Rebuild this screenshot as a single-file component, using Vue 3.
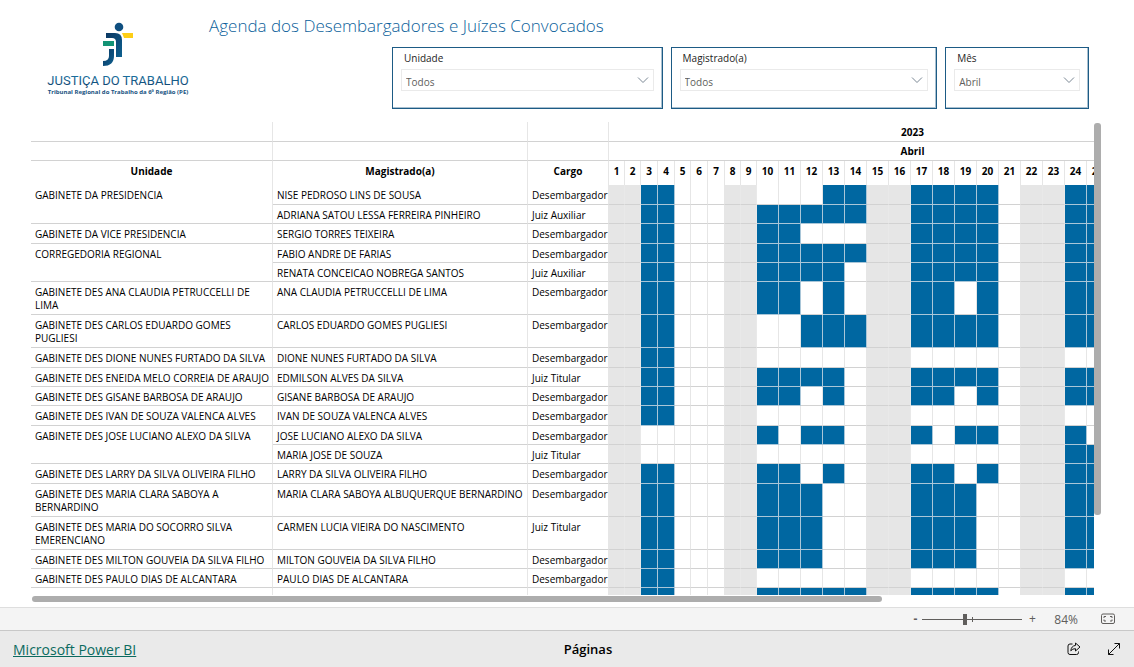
<script setup>
import { ref } from 'vue'

const filters = ref([
  { id: 'unidade', label: 'Unidade', value: 'Todos' },
  { id: 'magistrado', label: 'Magistrado(a)', value: 'Todos' },
  { id: 'mes', label: 'Mês', value: 'Abril' },
])
const zoom = ref(84)

const days = Array.from({ length: 25 }, (_, i) => i + 1)
const wideSingles = [3, 4, 6, 7]
const weekend = (d) => d % 7 === 1 || d % 7 === 2

const dayClass = (d) => (d > 9 ? 'c-double' : wideSingles.includes(d) ? 'c-wide' : 'c-single')

const D = 'Desembargador'
const A = 'Juiz Auxiliar'
const T = 'Juiz Titular'
const all = [3, 4, 10, 11, 12, 13, 14, 17, 18, 19, 20, 24, 25]
const rows = [
  { u: 'GABINETE DA PRESIDENCIA', span: 2, m: 'NISE PEDROSO LINS DE SOUSA', c: D, size: 'mid', on: [3, 4, 13, 14, 17, 18, 19, 20, 24, 25] },
  { m: 'ADRIANA SATOU LESSA FERREIRA PINHEIRO', c: A, size: 'low', on: all },
  { u: 'GABINETE DA VICE PRESIDENCIA', m: 'SERGIO TORRES TEIXEIRA', c: D, size: 'mid', on: [3, 4, 10, 11, 17, 18, 19, 20, 24, 25] },
  { u: 'CORREGEDORIA REGIONAL', span: 2, m: 'FABIO ANDRE DE FARIAS', c: D, size: 'low', on: all },
  { m: 'RENATA CONCEICAO NOBREGA SANTOS', c: A, size: 'low', on: [3, 4, 10, 11, 12, 13, 17, 18, 19, 20, 24, 25] },
  { u: 'GABINETE DES ANA CLAUDIA PETRUCCELLI DE LIMA', m: 'ANA CLAUDIA PETRUCCELLI DE LIMA', c: D, size: 'tall', on: [3, 4, 10, 11, 13, 17, 18, 20, 24, 25] },
  { u: 'GABINETE DES CARLOS EDUARDO GOMES PUGLIESI', m: 'CARLOS EDUARDO GOMES PUGLIESI', c: D, size: 'tall', on: [3, 4, 12, 13, 14, 17, 18, 19, 20, 24, 25] },
  { u: 'GABINETE DES DIONE NUNES FURTADO DA SILVA', m: 'DIONE NUNES FURTADO DA SILVA', c: D, size: 'mid', on: [3, 4] },
  { u: 'GABINETE DES ENEIDA MELO CORREIA DE ARAUJO', m: 'EDMILSON ALVES DA SILVA', c: T, size: 'low', on: [3, 4, 10, 11, 12, 13, 17, 18, 19, 20, 24, 25] },
  { u: 'GABINETE DES GISANE BARBOSA DE ARAUJO', m: 'GISANE BARBOSA DE ARAUJO', c: D, size: 'low', on: [3, 4, 10, 11, 13, 17, 18, 20, 24, 25] },
  { u: 'GABINETE DES IVAN DE SOUZA VALENCA ALVES', m: 'IVAN DE SOUZA VALENCA ALVES', c: D, size: 'mid', on: [3, 4] },
  { u: 'GABINETE DES JOSE LUCIANO ALEXO DA SILVA', span: 2, m: 'JOSE LUCIANO ALEXO DA SILVA', c: D, size: 'low', on: [10, 12, 13, 17, 19, 20, 24] },
  { m: 'MARIA JOSE DE SOUZA', c: T, size: 'low', on: [24, 25] },
  { u: 'GABINETE DES LARRY DA SILVA OLIVEIRA FILHO', m: 'LARRY DA SILVA OLIVEIRA FILHO', c: D, size: 'mid', on: [3, 4, 10, 11, 13, 17, 18, 20, 24, 25] },
  { u: 'GABINETE DES MARIA CLARA SABOYA A BERNARDINO', m: 'MARIA CLARA SABOYA ALBUQUERQUE BERNARDINO', c: D, size: 'tall', on: [3, 4, 10, 11, 12, 17, 18, 19, 24, 25] },
  { u: 'GABINETE DES MARIA DO SOCORRO SILVA EMERENCIANO', m: 'CARMEN LUCIA VIEIRA DO NASCIMENTO', c: T, size: 'tall', on: [3, 4, 10, 11, 12, 17, 18, 19, 24, 25] },
  { u: 'GABINETE DES MILTON GOUVEIA DA SILVA FILHO', m: 'MILTON GOUVEIA DA SILVA FILHO', c: D, size: 'low', on: [3, 4, 10, 11, 12, 17, 18, 19, 24, 25] },
  { u: 'GABINETE DES PAULO DIAS DE ALCANTARA', m: 'PAULO DIAS DE ALCANTARA', c: D, size: 'low', on: [3, 4] },
  { u: ' ', m: '', c: '', size: 'mid', on: all },
]
</script>

<template>
  <div class="page">
    <main class="report">
      <header class="top">
        <svg class="logo" viewBox="0 0 144 84" role="img" aria-label="Justiça do Trabalho">
          <defs>
            <linearGradient id="ink" x1="0" y1="0" x2="0" y2="1">
              <stop offset="0" stop-color="#1d7cab" />
              <stop offset="1" stop-color="#0d3c68" />
            </linearGradient>
            <linearGradient id="body" x1="0" y1="0" x2="1" y2="1">
              <stop offset="0" stop-color="#0b3762" />
              <stop offset="1" stop-color="#0d608f" />
            </linearGradient>
          </defs>
          <circle cx="73" cy="12" r="4.3" fill="#0f4f80" />
          <path d="M60 18H69Q76 18 76 25V42H70V27Q70 23 66 23H60Z" fill="url(#body)" />
          <path d="M76 18H87V23H78Z" fill="#fdce16" />
          <path d="M57 26H68V31H57Z" fill="#129375" />
          <path d="M63 34H68V41Q68 51 57 51V46Q63 46 63 41Z" fill="url(#body)" />
          <text x="72" y="70" text-anchor="middle" class="logo-name" fill="url(#ink)">JUSTIÇA DO TRABALHO</text>
          <text x="72" y="79" text-anchor="middle" class="logo-sub">Tribunal Regional do Trabalho da 6ª Região (PE)</text>
        </svg>
        <div class="heading">
          <h1>Agenda dos Desembargadores e Juízes Convocados</h1>
          <div class="filters">
            <div v-for="f in filters" :key="f.id" class="filter">
              <label :for="f.id">{{ f.label }}</label>
              <div class="pick">
                <select :id="f.id" v-model="f.value">
                  <option>{{ f.value }}</option>
                </select>
                <svg viewBox="0 0 12 8" aria-hidden="true"><path d="M1 1.500L6 6.500L11 1.500" /></svg>
              </div>
            </div>
          </div>
        </div>
      </header>

      <section class="matrix">
        <div class="viewport">
          <table>
            <colgroup>
              <col class="c-unit" /><col class="c-name" /><col class="c-role" />
              <col v-for="d in days" :key="d" :class="dayClass(d)" />
              <col class="c-rest" />
            </colgroup>
            <thead>
              <tr class="group"><th></th><th></th><th></th><th colspan="26">2023</th></tr>
              <tr class="group"><th></th><th></th><th></th><th colspan="26">Abril</th></tr>
              <tr class="names">
                <th>Unidade</th><th>Magistrado(a)</th><th>Cargo</th>
                <th v-for="d in days" :key="d">{{ d }}</th>
                <th></th>
              </tr>
            </thead>
            <tbody>
              <tr v-for="(r, i) in rows" :key="i" :class="r.size">
                <td v-if="r.u" :rowspan="r.span || 1">{{ r.u }}</td>
                <td>{{ r.m }}</td>
                <td class="role">{{ r.c }}</td>
                <td v-for="d in days" :key="d" class="mark" :class="{ on: r.on.includes(d), off: weekend(d) }"></td>
                <td></td>
              </tr>
            </tbody>
          </table>
        </div>
        <div class="vbar"><span></span></div>
        <div class="hbar"><span></span></div>
      </section>
    </main>

    <div class="zoombar">
      <button type="button" class="minus" aria-label="Reduzir">-</button>
      <input v-model="zoom" type="range" min="10" max="186" aria-label="Zoom" />
      <button type="button" aria-label="Ampliar">+</button>
      <output>84%</output>
      <button type="button" class="fit" aria-label="Ajustar à página">
        <svg viewBox="0 0 14 12"><rect x=".5" y="1" width="13" height="9.500" rx="1.500" /><path d="M5 3.500H3V5M3 6.500V8H5M9 3.500H11V5M11 6.500V8H9" /></svg>
      </button>
    </div>

    <footer>
      <a href="#">Microsoft Power BI</a>
      <strong>Páginas</strong>
      <div class="actions">
        <button type="button" aria-label="Compartilhar">
          <svg viewBox="0 0 14 14"><path d="M5.500 2H3Q1 2 1 4V10.500Q1 12.500 3 12.500H9.500Q11.500 12.500 11.500 10.500V9.500" /><path d="M8.500 1L13 5L8.500 9V6.700Q5.500 6.500 3.800 8.800Q4.200 4 8.500 3.400Z" /></svg>
        </button>
        <button type="button" aria-label="Tela inteira">
          <svg viewBox="0 0 14 14"><path d="M1.500 12.500L12.500 1.500M7.500 1.500H12.500V6.500M1.500 7.500V12.500H6.500" /></svg>
        </button>
      </div>
    </footer>
  </div>
</template>

<style>
body {
  margin: 0;
}
</style>

<style scoped>
* {
  box-sizing: border-box;
}
.page {
  display: flex;
  flex-direction: column;
  height: 100vh;
  overflow: hidden;
  background: #fff;
  color: #000;
  font-family: "Open Sans", "Noto Sans", sans-serif;
  font-size: 10px;
}
button {
  padding: 0;
  border: 0;
  background: none;
  color: inherit;
  font: inherit;
}
svg {
  display: block;
}
.report {
  display: flex;
  flex: 1;
  flex-direction: column;
  min-height: 0;
  padding: 15px 33px 5px 31px;
}
.top {
  display: flex;
  flex: none;
  height: 107px;
}
.logo {
  flex: none;
  width: 144px;
  height: 84px;
  margin-left: 15px;
}
.logo-name {
  font: 13px Roboto, sans-serif;
}
.logo-sub {
  fill: #17527f;
  font: 700 6px "Open Sans", sans-serif;
}
.heading {
  flex: 1;
  margin-left: 19px;
}
h1 {
  height: 32px;
  margin: 0;
  color: #0b5f9b;
  font-size: 17px;
  font-weight: 300;
  line-height: 22px;
}
.filters {
  display: grid;
  grid-template-columns: 271fr 267fr 144fr;
  gap: 8px;
  margin-right: 12px;
  margin-left: 183px;
}
.filter {
  height: 62px;
  padding: 3px 8px 0;
  border: 1px solid #1d5b85;
  box-shadow: inset -1px -1px #a9c0d0;
}
.filter label {
  display: block;
  padding-left: 3px;
  color: #252423;
  font-size: 10px;
  font-weight: 500;
  line-height: 14px;
}
.pick {
  display: flex;
  align-items: center;
  height: 22px;
  margin-top: 4px;
  padding: 0 4px;
  border: 1px solid #eaeaea;
}
.pick select {
  flex: 1;
  padding: 3px 0 0;
  border: 0;
  appearance: none;
  background: none;
  color: #605e5c;
  font: inherit;
}
.pick svg {
  width: 12px;
  height: 8px;
  fill: none;
  stroke: #7a8794;
}
.matrix {
  display: grid;
  flex: 1;
  grid-template-columns: minmax(0, 1fr) 7px;
  grid-template-rows: minmax(0, 1fr) 7px;
  min-height: 0;
}
.viewport {
  overflow: hidden;
}
table {
  width: 1186px;
  border-spacing: 0;
  table-layout: fixed;
}
.c-unit {
  width: 242px;
}
.c-name {
  width: 255px;
}
.c-role {
  width: 81px;
}
.c-single {
  width: 16px;
}
.c-wide {
  width: 17px;
}
.c-double {
  width: 22px;
}
th,
td {
  padding: 0;
  border-right: 1px solid #e6e6e6;
}
.group {
  height: 19px;
}
.group th {
  border-bottom: 1px solid #d2d2d2;
  line-height: 18px;
}
.group:first-child {
  height: 20px;
}
.names {
  height: 24px;
}
.names th {
  padding-bottom: 4px;
  line-height: 18px;
}
.low {
  height: 19px;
}
.mid {
  height: 20px;
}
.tall {
  height: 33px;
}
td {
  padding: 4px 0 0 4px;
  border-bottom: 1px solid #d2d2d2;
  line-height: 13px;
  vertical-align: top;
}
.low td,
.mid td {
  padding-top: 3px;
  line-height: 14px;
}
td.mark {
  padding: 0;
  line-height: 0;
}
.off {
  border-right-color: #e9e9e9;
  background: #e6e6e6;
}
.on {
  border-color: #a9c6d8;
  background: #0067a1;
}
.role {
  white-space: nowrap;
}
.vbar {
  grid-column: 2;
  padding-top: 1px;
}
.vbar span {
  display: block;
  height: 83%;
  border-radius: 3px;
  background: #adadad;
}
.hbar {
  grid-row: 2;
  grid-column: 1;
  padding: 1px 0 0 1px;
}
.hbar span {
  display: block;
  width: 80%;
  height: 6px;
  border-radius: 3px;
  background: #adadad;
}
.zoombar {
  display: flex;
  flex: none;
  align-items: center;
  justify-content: flex-end;
  height: 23px;
  padding-right: 19px;
  border-top: 1px solid #dedede;
  background: #f4f4f4;
  color: #605e5c;
  font-size: 12px;
}
.zoombar > button {
  width: 12px;
  line-height: 20px;
}
.zoombar .minus {
  width: 6px;
  font-weight: 700;
}
.zoombar input {
  width: 100px;
  height: 12px;
  margin: 0 4px;
  appearance: none;
  background:
    linear-gradient(#605e5c, #605e5c) 50px 50% / 1px 5px no-repeat,
    linear-gradient(#605e5c, #605e5c) 0 50% / 100% 1px no-repeat;
}
.zoombar input::-webkit-slider-thumb {
  width: 4px;
  height: 11px;
  appearance: none;
  background: #605e5c;
}
.zoombar output {
  margin: 0 23px 0 16px;
}
.zoombar .fit {
  width: 14px;
}
.fit svg {
  width: 14px;
  height: 12px;
  fill: none;
  stroke: #605e5c;
}
footer {
  display: grid;
  flex: none;
  grid-template-columns: 1fr auto 1fr;
  align-items: center;
  height: 37px;
  padding: 0 13px;
  border-top: 1px solid #c8c8c8;
  background: #eaeaea;
  font-size: 14px;
}
footer a {
  color: #0b6a5f;
}
footer strong {
  padding-left: 42px;
  font-size: 13px;
  font-weight: 600;
}
.actions {
  display: flex;
  gap: 26px;
  justify-content: flex-end;
}
.actions svg {
  width: 14px;
  height: 14px;
  fill: none;
  stroke: #111;
}
</style>
